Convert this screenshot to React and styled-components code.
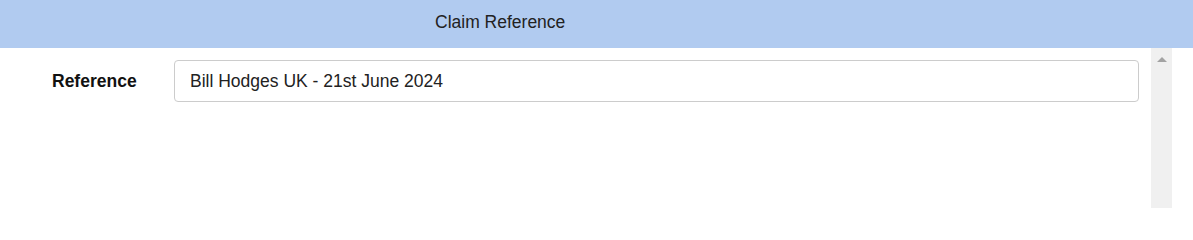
import React from "react";
import styled, { createGlobalStyle } from "styled-components";

const Global = createGlobalStyle`
  html, body { margin: 0; padding: 0; background: #fff; }
  body { font-family: "Liberation Sans", Arial, sans-serif; }
`;

const Page = styled.div`
  width: 1193px;
  height: 208px;
  display: flex;
  flex-direction: column;
  overflow: hidden;
`;

const Header = styled.div`
  height: 48px;
  background: #b1cbf0;
  display: flex;
  align-items: center;
  padding-left: 435px;
  padding-bottom: 3px;
  box-sizing: border-box;
  font-size: 17.5px;
  color: #222;
`;

const Body = styled.div`
  flex: 1;
  display: flex;
`;

const Content = styled.div`
  flex: 1;
  padding: 12px 12px 0 52px;
`;

const Row = styled.div`
  display: flex;
  align-items: center;
`;

const Label = styled.label`
  width: 122px;
  font-weight: bold;
  font-size: 17.5px;
  color: #111;
`;

const Input = styled.input`
  flex: 1;
  height: 42px;
  box-sizing: border-box;
  border: 1px solid #ccc;
  border-radius: 4px;
  padding: 0 15px;
  font-family: "Liberation Sans", Arial, sans-serif;
  font-size: 17.5px;
  color: #222;
  outline: none;
`;

const Scrollbar = styled.div`
  width: 21px;
  margin-right: 21px;
  background: #f0f0f0;
  display: flex;
  justify-content: center;
  padding-top: 9px;
  box-sizing: border-box;
`;

const Arrow = styled.div`
  width: 0;
  height: 0;
  border-left: 5px solid transparent;
  border-right: 5px solid transparent;
  border-bottom: 5px solid #a3a3a3;
`;

export default function App() {
  return (
    <>
      <Global />
      <Page>
        <Header>Claim Reference</Header>
        <Body>
          <Content>
            <Row>
              <Label>Reference</Label>
              <Input defaultValue="Bill Hodges UK - 21st June 2024" />
            </Row>
          </Content>
          <Scrollbar>
            <Arrow />
          </Scrollbar>
        </Body>
      </Page>
    </>
  );
}
